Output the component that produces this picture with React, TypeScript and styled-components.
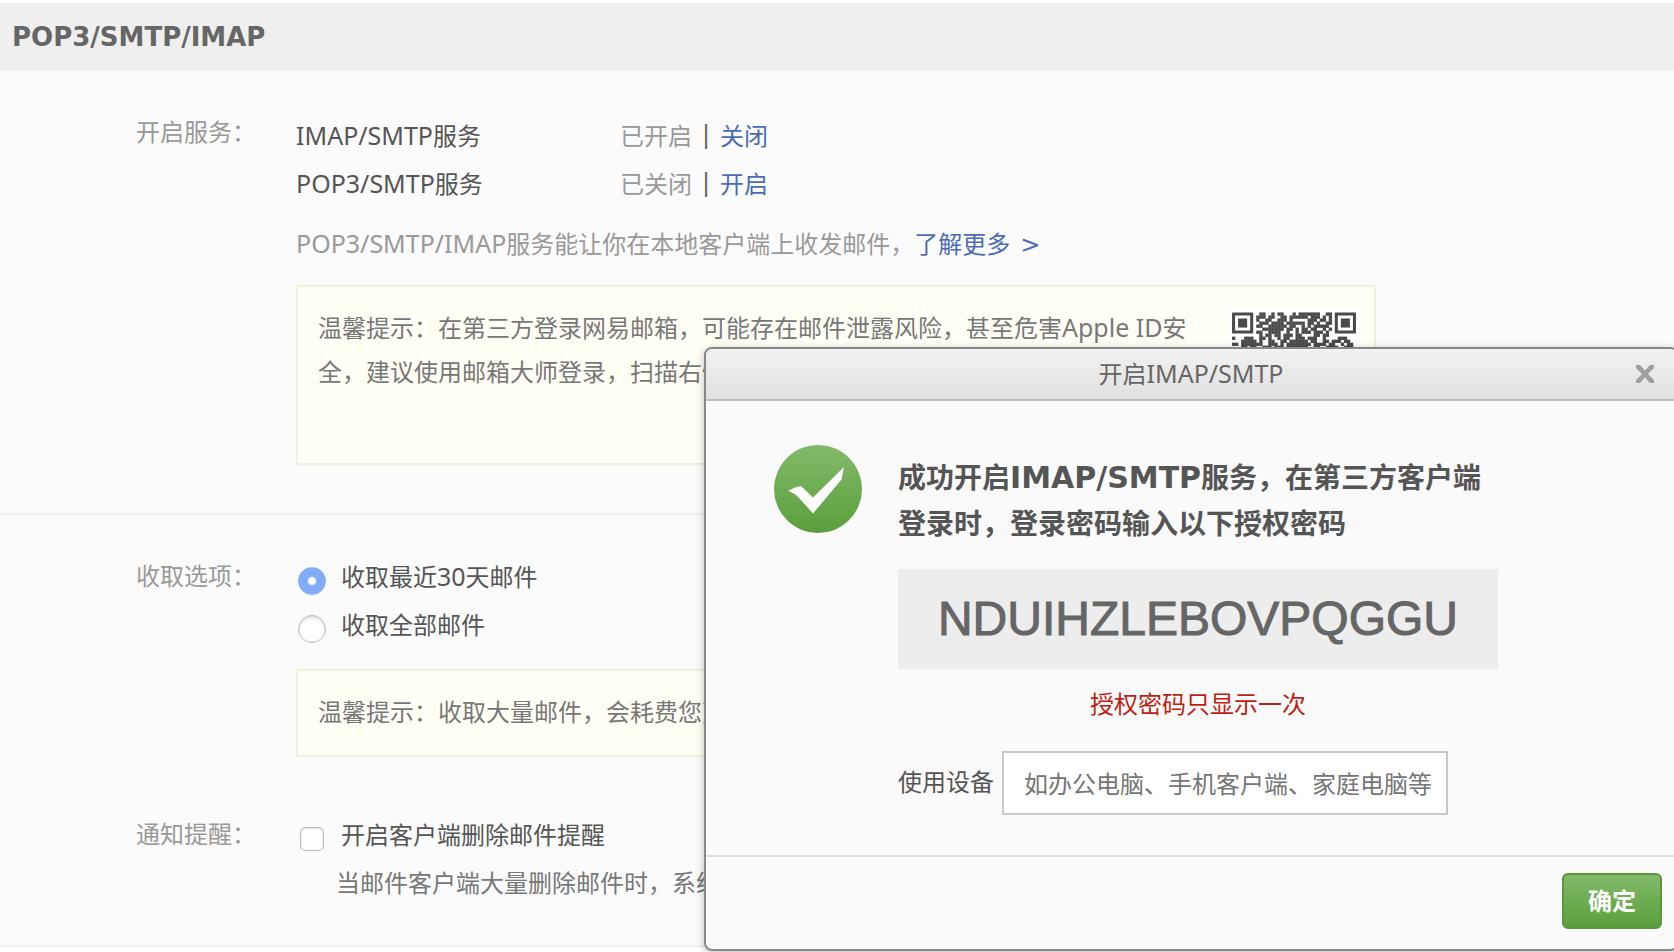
import React from "react";
import styled, { createGlobalStyle } from "styled-components";

const GlobalStyle = createGlobalStyle`
  *, *::before, *::after { box-sizing: border-box; }
  body {
    margin: 0;
    background: #fff;
    color: #555;
    font: 24px/48px "Noto Sans CJK SC", "Noto Sans", sans-serif;
  }
  h1, h2, p { margin: 0; font-weight: normal; }
  button, input { font: inherit; color: inherit; }
`;

const Page = styled.div`
  position: relative;
  min-height: 100vh;
  overflow: hidden;
  padding-top: 3px;
`;

const Header = styled.header`
  height: 68px;
  padding: 0 12px;
  display: flex;
  align-items: center;
  background: #efefef;
`;

const PageTitle = styled.h1`
  font: bold 26px/48px "DejaVu Sans", sans-serif;
  color: #666;
`;

const Section = styled.section<{ $top: number; $bottom: number; $ruled?: boolean }>`
  display: grid;
  grid-template-columns: 160px minmax(0, 1fr);
  padding: ${(p) => p.$top}px 0 ${(p) => p.$bottom}px 136px;
  background: #fbfbfb;
  border-bottom: ${(p) => (p.$ruled ? "2px solid #f0f0f0" : "none")};
`;

const SectionLabel = styled.h2<{ $line?: number }>`
  font-size: 24px;
  line-height: ${(p) => p.$line ?? 46}px;
  color: #999;
`;

const Latin = styled.span`
  font-family: "Noto Sans", sans-serif;
  font-size: 25px;
  line-height: 1;
`;

const HeavyLatin = styled.span`
  font-family: "DejaVu Sans", sans-serif;
  font-size: 30px;
  line-height: 1;
`;

const ServiceRow = styled.div`
  display: grid;
  grid-template-columns: 324px auto;
  height: 48px;
`;

const ServiceState = styled.div`
  display: flex;
  gap: 10px;
  color: #999;
`;

const Divider = styled.span`
  font-family: "DejaVu Sans", sans-serif;
  color: #666;
`;

const Link = styled.a`
  color: #4a6cb5;
  text-decoration: none;
`;

const Arrow = styled.span`
  font-family: "DejaVu Sans", sans-serif;
  line-height: 1;
  margin-left: 10px;
`;

const Info = styled.p`
  margin-top: 12px;
  height: 48px;
  color: #999;
`;

const Notice = styled.div<{ $gap: number }>`
  display: flex;
  justify-content: space-between;
  gap: 20px;
  max-width: 1080px;
  min-height: 88px;
  margin-top: ${(p) => p.$gap}px;
  padding: 18px 12px 20px 20px;
  border: 2px solid #f0f0de;
  background: #fffff5;
  line-height: 44px;
  color: #777;
`;

const QrCode = styled.svg`
  flex: none;
  width: 136px;
  height: 136px;
  margin-top: 2px;
  background: #fff;
`;

const Option = styled.label`
  display: flex;
  align-items: center;
  height: 48px;
`;

const Radio = styled.input`
  appearance: none;
  width: 28px;
  height: 28px;
  margin: 9px 15px 0 2px;
  border: 1px solid #bbb;
  border-radius: 50%;
  background: #fff;
  box-shadow: inset 0 2px 3px rgba(0, 0, 0, 0.12);
  &:checked {
    border-color: #82abf8;
    background: radial-gradient(circle, #fff 3px, #82abf8 5px);
    box-shadow: none;
  }
`;

const Checkbox = styled.input`
  appearance: none;
  width: 24px;
  height: 24px;
  margin: 9px 17px 0 4px;
  border: 1px solid #bbb;
  border-radius: 5px;
  background: #fff;
  box-shadow: inset 0 1px 2px rgba(0, 0, 0, 0.12);
  &:checked { background: #82abf8; }
`;

const Hint = styled.p`
  padding-left: 40px;
  color: #777;
`;

const Dialog = styled.div`
  position: absolute;
  top: 347px;
  left: 704px;
  right: -4px;
  border: 2px solid #888;
  border-radius: 8px;
  background: #fafafa;
  box-shadow: 0 2px 8px rgba(0, 0, 0, 0.25);
  overflow: hidden;
`;

const TitleBar = styled.div`
  display: grid;
  grid-template-columns: 1fr auto 1fr;
  align-items: center;
  height: 52px;
  padding: 0 22px;
  border-bottom: 2px solid #bfbfbf;
  background: linear-gradient(#f2f2f2, #e0e0e0);
`;

const DialogTitle = styled.h2`
  grid-column: 2;
  padding-bottom: 2px;
  font-size: 24px;
  color: #666;
`;

const CloseButton = styled.button`
  justify-self: end;
  display: flex;
  width: 18px;
  height: 18px;
  padding: 0;
  border: 0;
  background: none;
  color: #a0a0a0;
`;

const DialogBody = styled.div`
  display: flex;
  align-items: flex-start;
  gap: 36px;
  padding: 44px 68px 40px;
`;

const SuccessMark = styled.svg`
  flex: none;
  width: 88px;
  height: 88px;
`;

const Result = styled.div`
  flex: 0 1 600px;
  padding-top: 8px;
`;

const Message = styled.p`
  font-size: 28px;
  font-weight: bold;
  line-height: 46px;
`;

const Code = styled.p`
  margin-top: 24px;
  background: #ededed;
  color: #666;
  font: 48px/100px "Liberation Sans", sans-serif;
  -webkit-text-stroke: 1px #666;
  text-align: center;
`;

const Warning = styled.p`
  margin-top: 12px;
  line-height: 44px;
  text-align: center;
  color: #be1e12;
`;

const Field = styled.label`
  display: flex;
  gap: 8px;
  margin-top: 26px;
  line-height: 60px;
`;

const TextBox = styled.input`
  width: 446px;
  height: 64px;
  padding: 0 10px 2px 20px;
  border: 2px solid #c8c8c8;
  border-radius: 0;
  background: #fff;
  &::placeholder { color: #757575; opacity: 1; }
`;

const Footer = styled.div`
  display: flex;
  justify-content: flex-end;
  padding: 16px 14px 20px;
  border-top: 2px solid #dfdfdf;
  box-shadow: inset 0 2px #fff;
`;

const ConfirmButton = styled.button`
  width: 100px;
  height: 56px;
  padding: 0 0 2px;
  border: 2px solid #5b963f;
  border-radius: 6px;
  background: linear-gradient(#82b96a, #5b9f3b);
  color: #fff;
  font-weight: bold;
  line-height: 48px;
`;

const QR_ROWS = [
  ".........11..1.11...1.1111111..11........",
  "........111.11..11.111111.111.1.1........",
  "........1..11..111.1.....111.11.1........",
  ".........111.1111.111111.11.1..11........",
  "........11..111111.11..1.1.11111.........",
  "..........1111111.11.1.11.11..1.1........",
  "........11..1111..1..1.111.111.1.........",
  ".........1.11.11.111.11....11.11.........",
  "1...111..11.1..1.11..111.111..1....111...",
  "...11111.1..11..11.111111.11..11.111.11..",
  "11.1111111..111.1.11111111.1111.11..1.11.",
  "...11.11..111.111.1111111..11..1111..111.",
];

function Finder({ x, y }: { x: number; y: number }) {
  return (
    <g transform={`translate(${x} ${y})`}>
      <path d="M0 0H7V7H0ZM1 1V6H6V1Z" fillRule="evenodd" />
      <path d="M2 2H5V5H2Z" />
    </g>
  );
}

function QrPicture() {
  return (
    <QrCode viewBox="-2 -1.8 45 45" role="img" aria-label="二维码" fill="#4a4a4a">
      {QR_ROWS.flatMap((row, y) =>
        row.split("").map((bit, x) =>
          bit === "1" ? <rect key={`${x}-${y}`} x={x} y={y} width="1.1" height="1.1" /> : null
        )
      )}
      <Finder x={0} y={0} />
      <Finder x={34} y={0} />
      <Finder x={0} y={34} />
    </QrCode>
  );
}

function Service({ name, state, action }: { name: string; state: string; action: string }) {
  return (
    <ServiceRow>
      <span><Latin>{name}</Latin>服务</span>
      <ServiceState>
        <span>{state}</span>
        <Divider>|</Divider>
        <Link href="#">{action}</Link>
      </ServiceState>
    </ServiceRow>
  );
}

export default function App() {
  return (
    <Page>
      <GlobalStyle />
      <Header><PageTitle>POP3/SMTP/IMAP</PageTitle></Header>

      <Section $top={40} $bottom={48} $ruled>
        <SectionLabel $line={40}>开启服务：</SectionLabel>
        <div>
          <Service name="IMAP/SMTP" state="已开启" action="关闭" />
          <Service name="POP3/SMTP" state="已关闭" action="开启" />
          <Info>
            <Latin>POP3/SMTP/IMAP</Latin>服务能让你在本地客户端上收发邮件，
            <Link href="#">了解更多<Arrow>&gt;</Arrow></Link>
          </Info>
          <Notice $gap={18}>
            <p>
              温馨提示：在第三方登录网易邮箱，可能存在邮件泄露风险，甚至危害<Latin>Apple ID</Latin>安全，建议使用邮箱大师登录，扫描右侧二维码下载
            </p>
            <QrPicture />
          </Notice>
        </div>
      </Section>

      <Section $top={37} $bottom={16}>
        <SectionLabel>收取选项：</SectionLabel>
        <div>
          <Option>
            <Radio type="radio" name="range" defaultChecked />
            <span>收取最近<Latin>30</Latin>天邮件</span>
          </Option>
          <Option>
            <Radio type="radio" name="range" />
            <span>收取全部邮件</span>
          </Option>
          <Notice $gap={21}>
            <p>温馨提示：收取大量邮件，会耗费您更多时间</p>
          </Notice>
        </div>
      </Section>

      <Section $top={37} $bottom={39} $ruled>
        <SectionLabel>通知提醒：</SectionLabel>
        <div>
          <Option>
            <Checkbox type="checkbox" />
            <span>开启客户端删除邮件提醒</span>
          </Option>
          <Hint>当邮件客户端大量删除邮件时，系统会提醒您</Hint>
        </div>
      </Section>

      <Dialog role="dialog" aria-labelledby="dialog-title">
        <TitleBar>
          <DialogTitle id="dialog-title">开启<Latin>IMAP/SMTP</Latin></DialogTitle>
          <CloseButton type="button" aria-label="关闭">
            <svg width="18" height="18" viewBox="0 0 18 18" aria-hidden="true">
              <path d="M0 0H4L9 5.500 14 0H18V3L12 9 18 15V18H14L9 12.500 4 18H0V15L6 9 0 3Z" fill="currentColor" />
            </svg>
          </CloseButton>
        </TitleBar>
        <DialogBody>
          <SuccessMark viewBox="0 0 88 88" aria-hidden="true">
            <defs>
              <linearGradient id="mark" x1="0" y1="0" x2="0" y2="1">
                <stop offset="0" stopColor="#83ba6c" />
                <stop offset="1" stopColor="#5a9e3a" />
              </linearGradient>
            </defs>
            <circle cx="44" cy="44" r="44" fill="url(#mark)" />
            <path
              d="M14 46Q20 42 27 41L39 52.5L70 22L67.500 34.500L39 68.500L26 54Q21 48 14 46Z"
              fill="#fff"
            />
          </SuccessMark>
          <Result>
            <Message>
              成功开启<HeavyLatin>IMAP/SMTP</HeavyLatin>服务，在第三方客户端登录时，登录密码输入以下授权密码
            </Message>
            <Code>NDUIHZLEBOVPQGGU</Code>
            <Warning>授权密码只显示一次</Warning>
            <Field>
              使用设备
              <TextBox type="text" placeholder="如办公电脑、手机客户端、家庭电脑等" />
            </Field>
          </Result>
        </DialogBody>
        <Footer>
          <ConfirmButton type="button">确定</ConfirmButton>
        </Footer>
      </Dialog>
    </Page>
  );
}
